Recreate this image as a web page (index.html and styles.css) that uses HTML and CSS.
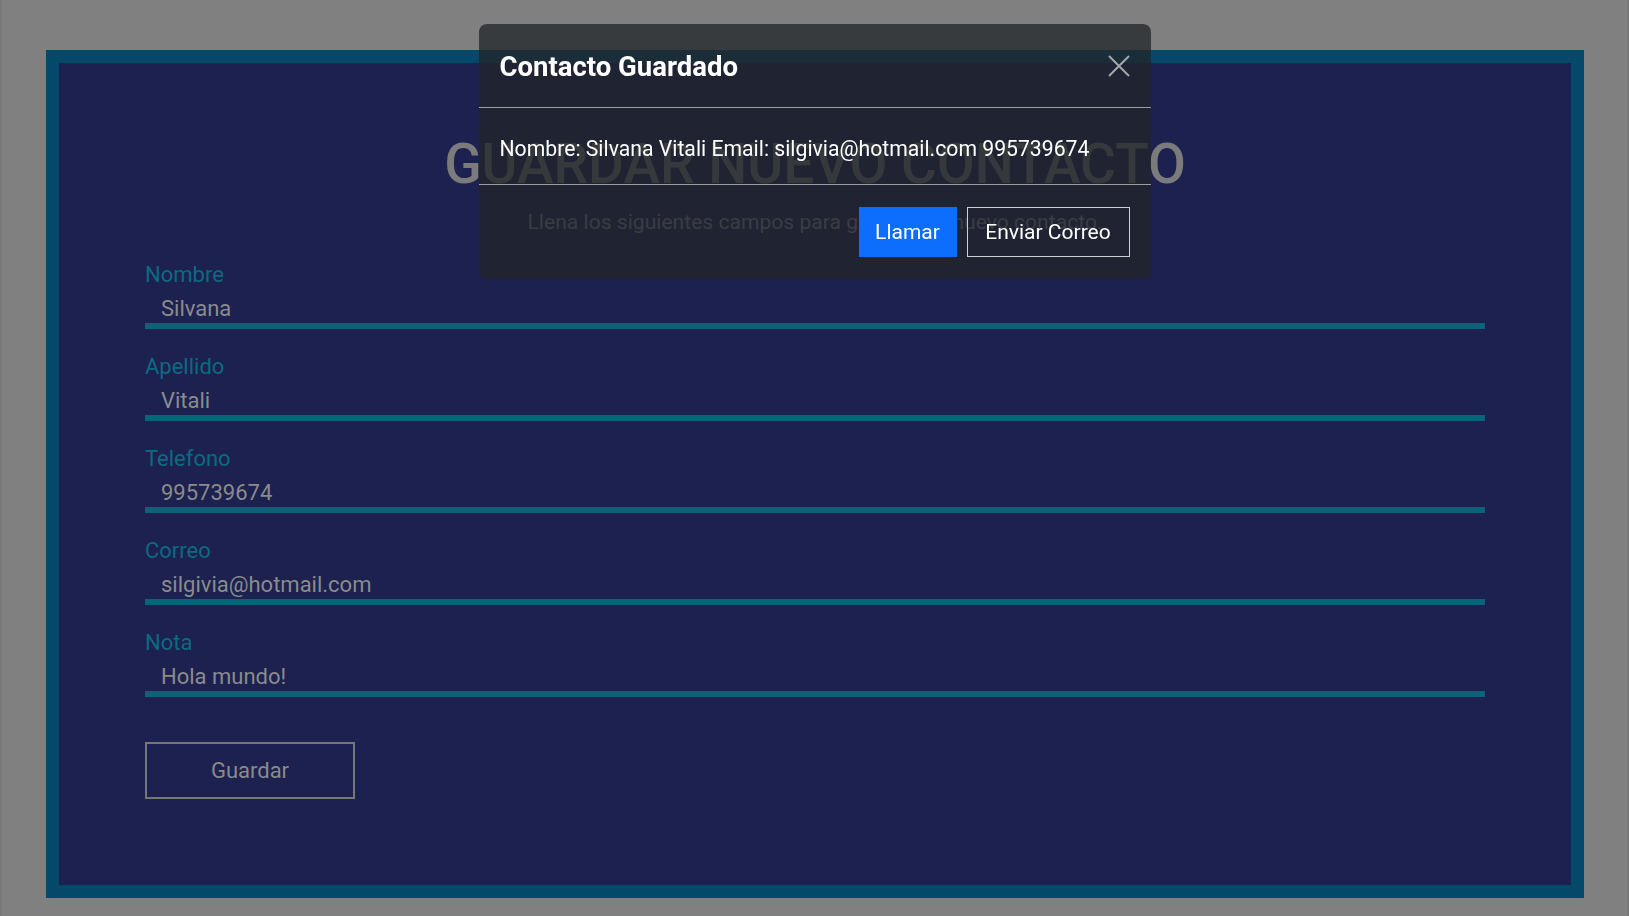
FILE: index.html
```html
<!DOCTYPE html>
<html lang="es">
<head>
<meta charset="utf-8">
<title>Guardar Contacto</title>
<link rel="stylesheet" href="styles.css">
</head>
<body>
<div class="page">
  <main class="card">
    <h1 class="title">GUARDAR NUEVO CONTACTO</h1>
    <p class="subtitle">Llena los siguientes campos para guardar un nuevo contacto.</p>
    <form class="form">
      <div class="field">
        <label class="label">Nombre</label>
        <input class="input" type="text" value="Silvana" readonly>
      </div>
      <div class="field">
        <label class="label">Apellido</label>
        <input class="input" type="text" value="Vitali" readonly>
      </div>
      <div class="field">
        <label class="label">Telefono</label>
        <input class="input" type="text" value="995739674" readonly>
      </div>
      <div class="field">
        <label class="label">Correo</label>
        <input class="input" type="text" value="silgivia@hotmail.com" readonly>
      </div>
      <div class="field">
        <label class="label">Nota</label>
        <input class="input" type="text" value="Hola mundo!" readonly>
      </div>
      <button class="save-btn" type="button">Guardar</button>
    </form>
  </main>
</div>

<div class="overlay">
  <div class="modal">
    <div class="modal-header">
      <h5 class="modal-title">Contacto Guardado</h5>
      <button class="close" type="button" aria-label="Cerrar">
        <svg width="22" height="22" viewBox="0 0 22 22"><path d="M1 1 L21 21 M21 1 L1 21" stroke="#a3a6ab" stroke-width="2" fill="none"/></svg>
      </button>
    </div>
    <div class="modal-body">Nombre: Silvana Vitali Email: silgivia@hotmail.com 995739674</div>
    <div class="modal-footer">
      <button class="btn btn-primary" type="button">Llamar</button>
      <button class="btn btn-outline" type="button">Enviar Correo</button>
    </div>
  </div>
</div>
</body>
</html>
```
FILE: styles.css
```css
* { box-sizing: border-box; }
html, body { margin: 0; padding: 0; }
body {
  background: #808080;
  font-family: "Roboto", "Noto Sans", sans-serif;
  box-shadow: inset 2px 0 #797979, inset -2px 0 #797979;
  min-height: 916px;
}
.page {
  height: 916px;
  padding: 50px 45px 18px 46px;
}
.card {
  height: 100%;
  border: 13px solid #05496a;
  background: #1c2150;
  padding: 74px 86px 0 86px;
}
.title {
  margin: 0;
  text-align: center;
  font-size: 55px;
  line-height: 1;
  font-weight: 500;
  color: #7b7b7b;
}
.subtitle {
  margin: 17px 0 0;
  text-align: center;
  font-size: 21.1px;
  line-height: normal;
  color: #86869a;
}
.form { display: flex; flex-direction: column; gap: 23px; margin-top: 26px; }
.field { display: flex; flex-direction: column; }
.label {
  font-size: 22px;
  line-height: 30px;
  color: #0c6a80;
}
.input {
  height: 39px;
  padding: 3px 16px 0;
  border: none;
  border-bottom: 6px solid #0a6479;
  background: transparent;
  color: #8b8b8b;
  font: 22px "Roboto", sans-serif;
  outline: none;
}
.save-btn {
  align-self: flex-start;
  margin-top: 22px;
  width: 210px;
  height: 57px;
  border: 2px solid #777;
  background: transparent;
  color: #8a8a8a;
  font: 22px "Roboto", sans-serif;
}
.overlay {
  position: fixed;
  inset: 0;
  display: flex;
  justify-content: center;
  align-items: flex-start;
  padding-top: 24px;
}
.modal {
  width: 672px;
  border-radius: 8px;
  background: rgba(33, 37, 41, 0.76);
  color: #fff;
}
.modal-header {
  height: 84px;
  display: flex;
  align-items: center;
  justify-content: space-between;
  padding: 1px 21px 0;
  border-bottom: 1px solid #9a9da2;
}
.modal-title { margin: 0; font-size: 27.5px; font-weight: 700; line-height: normal; }
.close { background: none; border: none; padding: 0; width: 22px; height: 22px; display: flex; margin-top: -1px; }
.modal-body {
  height: 77px;
  padding: 25px 21px 20px;
  font-size: 21.2px;
  line-height: 32px;
  border-bottom: 1px solid #9a9da2;
}
.modal-footer {
  display: flex;
  justify-content: flex-end;
  gap: 10px;
  padding: 22px 21px;
}
.btn {
  height: 50px;
  font: 21px "Roboto", sans-serif;
  color: #fff;
  padding: 0 12px;
}
.btn-primary { background: #0d6efd; border: none; width: 98px; }
.btn-outline { background: transparent; border: 1px solid #d0d0d0; width: 163px; }
```
